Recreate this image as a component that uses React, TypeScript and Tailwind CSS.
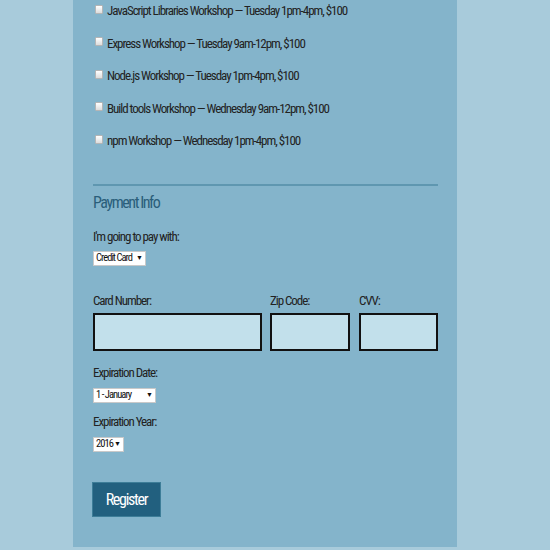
import React from "react";

const workshops = [
  "JavaScript Libraries Workshop — Tuesday 1pm-4pm, $100",
  "Express Workshop — Tuesday 9am-12pm, $100",
  "Node.js Workshop — Tuesday 1pm-4pm, $100",
  "Build tools Workshop — Wednesday 9am-12pm, $100",
  "npm Workshop — Wednesday 1pm-4pm, $100",
];

const FakeSelect: React.FC<{ label: string; width: string }> = ({ label, width }) => (
  <div
    className={`relative flex h-[15px] items-center whitespace-nowrap border border-[#c9c9c9] bg-white pl-[2px] text-[10.5px] leading-none tracking-[-0.09em] text-[#111] ${width}`}
  >
    <span>{label}</span>
    <span className="absolute right-[3px] top-[3px] text-[7px] leading-none">▼</span>
  </div>
);

export default function App() {
  return (
    <div className="min-h-[550px] w-[550px] bg-[#a8cbdb] font-['Roboto',sans-serif] font-stretch-condensed">
      <div className="ml-[73px] w-[384px] bg-[#84b4cb] pl-[20px] pr-[19px] pb-[30px] pt-[1px] text-[13px] tracking-[-0.08em] text-[#222]">
        {/* Workshop list */}
        <div className="flex flex-col gap-[12.5px]">
          {workshops.map((w) => (
            <div key={w} className="flex h-5 items-center">
              <span className="ml-[2px] mr-[4px] h-[9px] w-[8px] -translate-y-[2px] rounded-[1px] border border-[#b5b5b5] bg-gradient-to-b from-white to-[#dcdcdc]" />
              <span className="leading-5 whitespace-nowrap">{w}</span>
            </div>
          ))}
        </div>

        <div className="mt-[33px] h-[2px] w-full bg-[#5f97b0]" />

        {/* Payment */}
        <h2 className="mt-[7px] text-[16px] leading-5 tracking-[-0.09em] text-[#2a5e7a]">Payment Info</h2>

        <p className="mt-[14px] leading-5">I'm going to pay with:</p>
        <div className="mt-[4px]">
          <FakeSelect label="Credit Card" width="w-[53px]" />
        </div>

        <div className="mt-[25px] flex">
          <div className="w-[169px]">
            <p className="leading-5">Card Number:</p>
            <div className="mt-[2px] h-[38px] border-2 border-[#111] bg-[#c2e0eb]" />
          </div>
          <div className="ml-[8px] w-[80px]">
            <p className="leading-5">Zip Code:</p>
            <div className="mt-[2px] h-[38px] border-2 border-[#111] bg-[#c2e0eb]" />
          </div>
          <div className="ml-[9px] w-[79px]">
            <p className="leading-5">CVV:</p>
            <div className="mt-[2px] h-[38px] border-2 border-[#111] bg-[#c2e0eb]" />
          </div>
        </div>

        <p className="mt-[12px] leading-5">Expiration Date:</p>
        <div className="mt-[5px]">
          <FakeSelect label="1 - January" width="w-[63px]" />
        </div>

        <p className="mt-[9px] leading-5">Expiration Year:</p>
        <div className="mt-[5px]">
          <FakeSelect label="2016" width="w-[31px]" />
        </div>

        <button className="mt-[30px] ml-[-1px] h-[35px] w-[69px] border border-[#3d7d98] bg-[#22607f] text-[16px] tracking-[-0.08em] text-white">
          Register
        </button>
      </div>
    </div>
  );
}
